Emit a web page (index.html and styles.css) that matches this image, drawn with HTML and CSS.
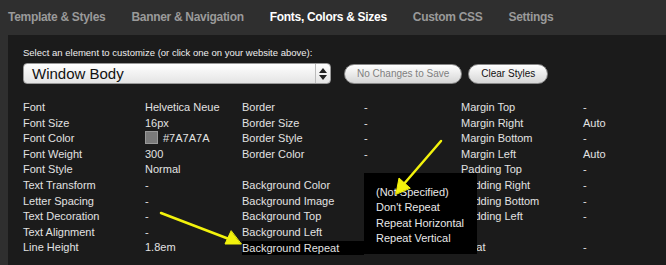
FILE: index.html
```html
<!DOCTYPE html>
<html lang="en">
<head>
    <meta charset="UTF-8">
    <title>Fonts, Colors &amp; Sizes</title>
    <link rel="stylesheet" href="styles.css">
</head>
<body>
    <div class="nav">
        <span class="tab">Template &amp; Styles</span>
        <span class="tab">Banner &amp; Navigation</span>
        <span class="tab active">Fonts, Colors &amp; Sizes</span>
        <span class="tab">Custom CSS</span>
        <span class="tab">Settings</span>
    </div>

    <div class="panel">
        <div class="hint">Select an element to customize (or click one on your website above):</div>
        <div class="toolbar">
            <div class="picker">
                <span>Window Body</span>
                <span class="updown">
                    <svg width="8" height="12" viewBox="0 0 8 12"><path d="M4 0L8 5H0z M0 7H8L4 12z" fill="#222"/></svg>
                </span>
            </div>
            <button class="pill disabled">No Changes to Save</button>
            <button class="pill">Clear Styles</button>
        </div>

        <div class="props">
            <div class="col">
                <div class="row"><span class="key">Font</span><span>Helvetica Neue</span></div>
                <div class="row"><span class="key">Font Size</span><span>16px</span></div>
                <div class="row"><span class="key">Font Color</span><span><i class="swatch"></i>#7A7A7A</span></div>
                <div class="row"><span class="key">Font Weight</span><span>300</span></div>
                <div class="row"><span class="key">Font Style</span><span>Normal</span></div>
                <div class="row"><span class="key">Text Transform</span><span>-</span></div>
                <div class="row"><span class="key">Letter Spacing</span><span>-</span></div>
                <div class="row"><span class="key">Text Decoration</span><span>-</span></div>
                <div class="row"><span class="key">Text Alignment</span><span>-</span></div>
                <div class="row"><span class="key">Line Height</span><span>1.8em</span></div>
            </div>
            <div class="col">
                <div class="row"><span class="key">Border</span><span>-</span></div>
                <div class="row"><span class="key">Border Size</span><span>-</span></div>
                <div class="row"><span class="key">Border Style</span><span>-</span></div>
                <div class="row"><span class="key">Border Color</span><span>-</span></div>
                <div class="row"><span class="key"></span><span></span></div>
                <div class="row"><span class="key">Background Color</span><span></span></div>
                <div class="row"><span class="key">Background Image</span><span></span></div>
                <div class="row"><span class="key">Background Top</span><span></span></div>
                <div class="row"><span class="key">Background Left</span><span></span></div>
                <div class="row"><span class="key open">Background Repeat</span><span></span></div>
            </div>
            <div class="col">
                <div class="row"><span class="key">Margin Top</span><span>-</span></div>
                <div class="row"><span class="key">Margin Right</span><span>Auto</span></div>
                <div class="row"><span class="key">Margin Bottom</span><span>-</span></div>
                <div class="row"><span class="key">Margin Left</span><span>Auto</span></div>
                <div class="row"><span class="key">Padding Top</span><span>-</span></div>
                <div class="row"><span class="key">Padding Right</span><span>-</span></div>
                <div class="row"><span class="key">Padding Bottom</span><span>-</span></div>
                <div class="row"><span class="key">Padding Left</span><span>-</span></div>
                <div class="row"><span class="key"></span><span></span></div>
                <div class="row"><span class="key">Float</span><span>-</span></div>
            </div>
        </div>

        <ul class="menu">
            <li>(Not Specified)</li>
            <li>Don't Repeat</li>
            <li>Repeat Horizontal</li>
            <li>Repeat Vertical</li>
        </ul>
    </div>

    <!-- callout arrows drawn over the screenshot -->
    <svg class="arrows" width="666" height="265" viewBox="0 0 666 265">
        <g fill="#f2f20c" stroke="#f2f20c" stroke-linecap="round">
            <line x1="441" y1="141" x2="403" y2="185" stroke-width="2.5"/>
            <path d="M396 194L399 178L410 188z" stroke-width="1"/>
            <line x1="161" y1="213" x2="229" y2="239" stroke-width="2.5"/>
            <path d="M241 244L225 244L231 231z" stroke-width="1"/>
        </g>
    </svg>
</body>
</html>
```

FILE: styles.css
```css
body {
    margin: 0;
    background: #2f2f2f;
    font-family: "Liberation Sans", Arial, sans-serif;
    color: #e2e2e2;
    width: 666px;
    height: 265px;
    overflow: hidden;
    position: relative;
}
.nav {
    height: 35px;
    box-sizing: border-box;
    padding: 0 0 2px 8px;
    display: flex;
    align-items: center;
    gap: 26px;
}
.tab {
    font-size: 12px;
    font-weight: bold;
    letter-spacing: -0.3px;
    color: #9a9a9a;
}
.tab.active {
    color: #fff;
}
.panel {
    margin-left: 8px;
    height: 230px;
    background: #1b1b1b;
    padding: 12px 0 0 15px;
    box-sizing: border-box;
    position: relative;
}
.hint {
    font-size: 9.5px;
    line-height: 12px;
    color: #eee;
}
.toolbar {
    display: flex;
    align-items: center;
    margin-top: 4px;
}
.picker {
    width: 308px;
    height: 21px;
    box-sizing: border-box;
    border-radius: 4px;
    background: linear-gradient(#fff, #e4e4e4);
    border: 1px solid #999;
    display: flex;
    align-items: center;
    justify-content: space-between;
    padding-left: 8px;
    font-size: 15px;
    color: #111;
}
.updown {
    width: 14px;
    height: 19px;
    border-left: 1px solid #bbb;
    display: flex;
    align-items: center;
    justify-content: center;
}
.pill {
    height: 20px;
    margin-left: 13px;
    padding: 0 12px;
    border-radius: 10px;
    border: 1px solid #888;
    background: linear-gradient(#fff, #d6d6d6);
    font-family: "Liberation Sans", Arial, sans-serif;
    font-size: 10px;
    color: #111;
}
.pill + .pill {
    margin-left: 6px;
}
.pill.disabled {
    color: #808080;
}
.props {
    display: flex;
    margin-top: 16px;
    font-size: 11px;
}
.col {
    width: 219px;
    flex: none;
}
.row {
    display: flex;
    height: 15.6px;
    line-height: 15.6px;
}
.key {
    width: 122px;
    flex: none;
}
.key.open {
    background: #000;
    height: 14px;
    line-height: 15px;
    margin-top: 1px;
}
.swatch {
    display: inline-block;
    width: 11px;
    height: 11px;
    background: #7a7a7a;
    border: 1px solid #999;
    vertical-align: -2px;
    margin-right: 5px;
}
.menu {
    position: absolute;
    left: 356px;
    top: 138px;
    width: 113px;
    height: 81px;
    margin: 0;
    padding: 12px 0 0 12px;
    box-sizing: border-box;
    list-style: none;
    background: #000;
    font-size: 11px;
    line-height: 15.4px;
    color: #e8e8e8;
}
.arrows {
    position: absolute;
    left: 0;
    top: 0;
    pointer-events: none;
}
```
